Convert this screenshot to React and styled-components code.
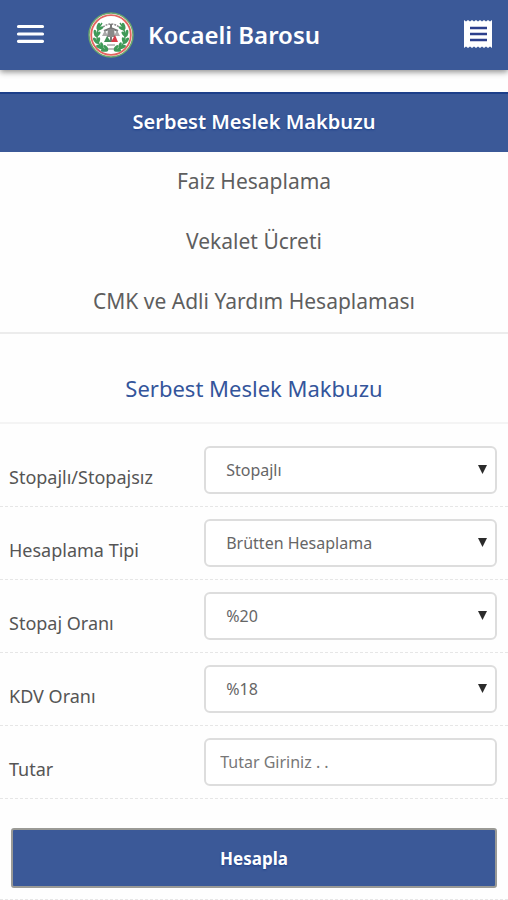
import React, { useState } from "react";
import styled, { createGlobalStyle } from "styled-components";

const GlobalStyle = createGlobalStyle`
  * {
    box-sizing: border-box;
  }

  body {
    margin: 0;
    background: #fefefe;
    color: #555;
    font-family: "Noto Sans", "Open Sans", sans-serif;
  }
`;

const Header = styled.header`
  display: flex;
  align-items: center;
  height: 70px;
  padding: 0 15px;
  background: #3b5998;
  box-shadow: 0 2px 6px rgba(0, 0, 0, 0.45);
`;

const IconButton = styled.button`
  display: flex;
  padding: 0;
  border: none;
  background: none;
  color: white;
  cursor: pointer;
`;

const Brand = styled.div`
  display: flex;
  flex: 1;
  align-items: center;
  gap: 14px;
  margin-left: 43px;
`;

const BrandName = styled.h1`
  margin: 0;
  color: white;
  font-size: 24px;
  font-weight: 600;
  line-height: 32px;
`;

const Tabs = styled.nav`
  display: flex;
  flex-direction: column;
  margin-top: 22px;
  border-bottom: 2px solid #ececec;
`;

const Tab = styled.button`
  height: 60px;
  padding: 0 0 4px;
  border: none;
  border-top: 2px solid ${(props) => (props.$active ? "#1c3f8a" : "transparent")};
  background: ${(props) => (props.$active ? "#3b5998" : "transparent")};
  color: ${(props) => (props.$active ? "white" : "#5e5e5e")};
  font-family: inherit;
  font-size: ${(props) => (props.$active ? "20px" : "21px")};
  font-weight: ${(props) => (props.$active ? 600 : 400)};
  text-shadow: ${(props) => (props.$active ? "0 1px 2px #1c3f8a" : "none")};
  cursor: pointer;
`;

const SectionTitle = styled.h2`
  margin: 0;
  padding: 38px 0 18px;
  border-bottom: 2px solid #f4f4f4;
  color: #34559b;
  font-size: 22px;
  font-weight: 400;
  line-height: 32px;
  text-align: center;
`;

const Form = styled.form`
  padding-top: 10px;
`;

const Row = styled.div`
  display: grid;
  grid-template-columns: 2fr 3fr;
  align-items: center;
  padding: 12px 11px 12px 9px;
  border-bottom: 1px dashed #e6e6e6;
`;

const Label = styled.label`
  padding-top: 14px;
  font-size: 18px;
  line-height: 24px;
`;

const SelectWrap = styled.div`
  position: relative;
`;

const Arrow = styled.svg`
  position: absolute;
  top: 19px;
  right: 10px;
  pointer-events: none;
`;

const Select = styled.select`
  display: block;
  width: 100%;
  height: 48px;
  padding: 0 20px;
  border: 2px solid #ddd;
  border-radius: 6px;
  background: white;
  color: #666;
  font-family: inherit;
  font-size: 16px;
  appearance: none;
`;

const Input = styled.input`
  display: block;
  width: 100%;
  height: 48px;
  padding: 0 14px;
  border: 2px solid #ddd;
  border-radius: 6px;
  background: white;
  color: #666;
  font-family: inherit;
  font-size: 16px;

  &::placeholder {
    color: #777;
    opacity: 1;
  }
`;

const Actions = styled.div`
  padding: 29px 11px 11px;
  border-bottom: 1px dashed #e6e6e6;
`;

const SubmitButton = styled.button`
  display: block;
  width: 100%;
  height: 60px;
  border: 2px solid #9a9a96;
  border-radius: 3px;
  background: #3b5998;
  color: white;
  font-family: inherit;
  font-size: 17px;
  font-weight: 700;
  text-shadow: 0 1px 2px #1c3f8a;
  cursor: pointer;
`;

const tabs = [
  "Serbest Meslek Makbuzu",
  "Faiz Hesaplama",
  "Vekalet Ücreti",
  "CMK ve Adli Yardım Hesaplaması",
];

const selects = [
  { id: "stopaj", label: "Stopajlı/Stopajsız", options: ["Stopajlı", "Stopajsız"] },
  { id: "tip", label: "Hesaplama Tipi", options: ["Brütten Hesaplama", "Netten Hesaplama"] },
  { id: "stopajOrani", label: "Stopaj Oranı", options: ["%20", "%17"] },
  { id: "kdvOrani", label: "KDV Oranı", options: ["%18", "%8"] },
];

function MenuIcon() {
  return (
    <svg width="30" height="22" viewBox="0 0 30 22" aria-hidden="true">
      <path
        d="M3.5 2.5h24M3.5 10h24M3.5 17.3h24"
        stroke="currentColor"
        strokeWidth="3.2"
        strokeLinecap="round"
      />
    </svg>
  );
}

function ReceiptIcon() {
  return (
    <svg width="30" height="32" viewBox="0 0 30 32" aria-hidden="true">
      <path
        fill="currentColor"
        d="M1 1l2 1.5 2-1.5 2 1.5 2-1.5 2 1.5 2-1.5 2 1.5 2-1.5 2 1.5 2-1.5 2 1.5 2-1.5 2 1.5 2-1.5v28l-2-1.5-2 1.5-2-1.5-2 1.5-2-1.5-2 1.5-2-1.5-2 1.5-2-1.5-2 1.5-2-1.5-2 1.5-2-1.5-2 1.5z"
      />
      <path d="M7 9h17M7 15h17M7 21h17" stroke="#2c3f8c" strokeWidth="2.5" />
    </svg>
  );
}

function Emblem() {
  const leaves = [
    [12, 34, 40],
    [8.5, 28, 10],
    [8.5, 21, -15],
    [11.5, 14.5, -40],
    [16.5, 37, 65],
  ];
  return (
    <svg width="46" height="46" viewBox="0 0 46 46" role="img" aria-label="Kocaeli Barosu">
      <circle cx="23" cy="23" r="22" fill="#fff" stroke="#6aa56c" strokeWidth="1.5" />
      <circle cx="23" cy="23" r="19.8" fill="none" stroke="#e2655f" strokeWidth="1.8" />
      {[0, 1].map((side) => (
        <g key={side} fill="#3f9a58" transform={side ? "translate(46 0) scale(-1 1)" : undefined}>
          <path
            d="M17 38C8 33 6 21 14 11"
            fill="none"
            stroke="#3f9a58"
            strokeWidth="1.5"
          />
          {leaves.map(([x, y, angle]) => (
            <g key={y} transform={`translate(${x} ${y}) rotate(${-angle})`}>
              <ellipse cx="-1.2" rx="1.6" ry="3.6" transform="rotate(-25)" />
              <ellipse cx="2" rx="1.5" ry="3.3" transform="rotate(25)" />
            </g>
          ))}
        </g>
      ))}
      <path d="M15 15Q23 9 31 15" fill="none" stroke="#888" strokeWidth="1.5" strokeDasharray="2 1" />
      <path d="M23 12v18M16 19l7-3 7 3" fill="none" stroke="#777" strokeWidth="2" />
      <path d="M14 24l3-6 3 6zM26 24l3-6 3 6z" fill="#aaa" />
      <path d="M20 17h6l1 8h-8z" fill="#898989" />
      <path d="M16 30l3-6 4 6z" fill="#3f8f56" />
      <path d="M23 30l4-7 3 7z" fill="#d63c48" />
      <path d="M19 33h8M20 37h6" stroke="#aaa" strokeWidth="1.5" />
    </svg>
  );
}

function App() {
  const [activeTab, setActiveTab] = useState(0);
  const [amount, setAmount] = useState("");

  return (
    <div>
      <GlobalStyle />
      <Header>
        <IconButton type="button" aria-label="Menü">
          <MenuIcon />
        </IconButton>
        <Brand>
          <Emblem />
          <BrandName>Kocaeli Barosu</BrandName>
        </Brand>
        <IconButton type="button" aria-label="Makbuz">
          <ReceiptIcon />
        </IconButton>
      </Header>

      <Tabs>
        {tabs.map((tab, index) => (
          <Tab
            key={tab}
            type="button"
            $active={index === activeTab}
            onClick={() => setActiveTab(index)}
          >
            {tab}
          </Tab>
        ))}
      </Tabs>

      <SectionTitle>{tabs[activeTab]}</SectionTitle>

      <Form onSubmit={(e) => e.preventDefault()}>
        {selects.map((field) => (
          <Row key={field.id}>
            <Label htmlFor={field.id}>{field.label}</Label>
            <SelectWrap>
              <Select id={field.id}>
                {field.options.map((option) => (
                  <option key={option}>{option}</option>
                ))}
              </Select>
              <Arrow width="9" height="9" viewBox="0 0 9 9" aria-hidden="true">
                <path d="M0 0h9L4.5 9z" fill="#2b2b2b" />
              </Arrow>
            </SelectWrap>
          </Row>
        ))}
        <Row>
          <Label htmlFor="tutar">Tutar</Label>
          <Input
            id="tutar"
            type="text"
            inputMode="decimal"
            placeholder="Tutar Giriniz . ."
            value={amount}
            onChange={(e) => setAmount(e.target.value)}
          />
        </Row>
        <Actions>
          <SubmitButton type="submit">Hesapla</SubmitButton>
        </Actions>
      </Form>
    </div>
  );
}

export default App;
